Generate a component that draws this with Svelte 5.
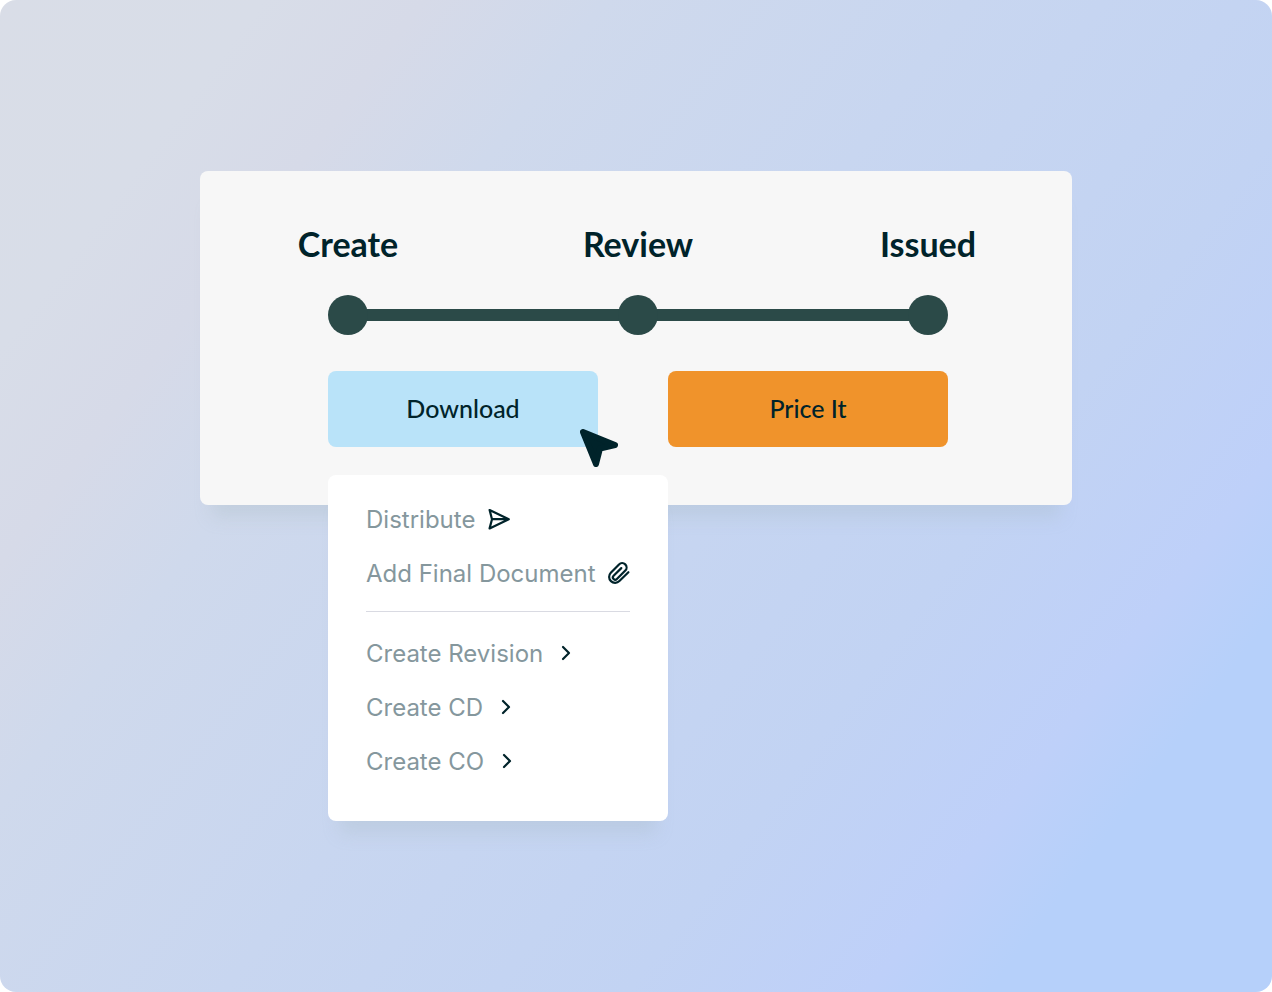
<script lang="ts">
  const steps = ['Create', 'Review', 'Issued'];

  const fileActions = [
    { label: 'Distribute', icon: 'send' },
    { label: 'Add Final Document', icon: 'clip' },
  ];

  const createActions = ['Create Revision', 'Create CD', 'Create CO'];

  let menuOpen = $state(true);
</script>

<main class="stage">
  <section class="card">
    <ol class="steps">
      {#each steps as step}
        <li class="step">
          <span class="step-label">{step}</span>
          <span class="step-dot"></span>
        </li>
      {/each}
    </ol>

    <div class="actions">
      <div class="dropdown">
        <button
          class="btn download"
          aria-expanded={menuOpen}
          onclick={() => (menuOpen = !menuOpen)}
        >
          Download
        </button>

        <svg class="cursor" viewBox="0 0 38 38" aria-hidden="true">
          <path
            d="M3 3L35 16L20 19.5L16 35Z"
            fill="#00232a"
            stroke="#00232a"
            stroke-width="6"
            stroke-linejoin="round"
          />
        </svg>

        {#if menuOpen}
          <div class="menu">
            {#each fileActions as action}
              <button class="menu-item">
                {action.label}
                {#if action.icon === 'send'}
                  <svg class="icon" viewBox="0 0 22 22" aria-hidden="true">
                    <path d="M2.6 1L21.8 10.2L2.6 19.4L5 10.2Z M5 10.2H21" />
                  </svg>
                {:else}
                  <svg class="icon" viewBox="2 3 22 22" aria-hidden="true">
                    <path
                      d="M22.4 12.2l-9 8.8a5.9 5.9 0 0 1-8.6-8.3l8.2-8.3a4.4 4.4 0 0 1 6.3 6.2l-8.4 8.4a2.3 2.3 0 0 1-3.3-3.3l7.7-7.6"
                    />
                  </svg>
                {/if}
              </button>
            {/each}

            <hr class="divider" />

            {#each createActions as label}
              <button class="menu-item">
                {label}
                <svg class="icon" viewBox="0 0 22 22" aria-hidden="true">
                  <path d="M8 4L14 10L8 16" />
                </svg>
              </button>
            {/each}
          </div>
        {/if}
      </div>

      <button class="btn price">Price It</button>
    </div>
  </section>
</main>

<style>
  :global(body) {
    margin: 0;
    background: #fff;
  }

  .stage {
    box-sizing: border-box;
    min-height: 100vh;
    padding: 171px 200px;
    border-radius: 16px;
    background: linear-gradient(
      127deg,
      #d9dde7 0%,
      #d8dde8 13%,
      #d6dae8 21%,
      #cfd9ec 30%,
      #c8d6f0 48%,
      #c2d3f3 68%,
      #bed0f9 80%,
      #b6d0fa 86%,
      #b6d0fa 100%
    );
    color: #00232a;
    font-family: Lato, 'Liberation Sans', sans-serif;
  }

  .card {
    padding: 53px 124px 58px 128px;
    border-radius: 8px;
    background: #f7f7f7;
    box-shadow: 0 24px 16px -12px rgba(160, 180, 185, 0.25);
  }

  .steps {
    display: flex;
    justify-content: space-between;
    margin: 0 0 36px;
    padding: 0;
    list-style: none;
    background: linear-gradient(#2b4a48, #2b4a48) no-repeat center bottom 14px / calc(100% - 40px) 12px;
  }

  .step {
    display: flex;
    flex-direction: column;
    align-items: center;
    gap: 31px;
    width: 40px;
  }

  .step-label {
    font-size: 34px;
    font-weight: 700;
    line-height: 40px;
    white-space: nowrap;
  }

  .step-dot {
    width: 40px;
    height: 40px;
    border-radius: 50%;
    background: #2b4a48;
  }

  .actions {
    display: grid;
    grid-template-columns: 27fr 28fr;
    gap: 70px;
  }

  .dropdown {
    position: relative;
  }

  .btn {
    width: 100%;
    height: 76px;
    padding: 0 0 2px;
    border: none;
    border-radius: 8px;
    color: #00232a;
    font-family: inherit;
    font-size: 25px;
    font-weight: 500;
    cursor: pointer;
  }

  .download {
    background: #b9e3f9;
  }

  .price {
    background: #f0932b;
  }

  .cursor {
    position: absolute;
    right: -20px;
    bottom: -20px;
    width: 38px;
    height: 38px;
    pointer-events: none;
  }

  .menu {
    position: absolute;
    top: calc(100% + 28px);
    left: 0;
    padding: 18px 38px 32px;
    border-radius: 8px;
    background: #fff;
    box-shadow: 0 24px 16px -12px rgba(160, 180, 185, 0.25);
  }

  .menu-item {
    display: flex;
    align-items: center;
    gap: 12px;
    width: 100%;
    padding: 0;
    border: none;
    background: none;
    color: #85979d;
    font-family: Inter, 'Liberation Sans', sans-serif;
    font-size: 24px;
    line-height: 54px;
    white-space: nowrap;
    cursor: pointer;
  }

  .icon {
    flex: none;
    width: 22px;
    height: 22px;
    overflow: visible;
    fill: none;
    stroke: #00232a;
    stroke-width: 2.2;
    stroke-linecap: round;
    stroke-linejoin: round;
  }

  .divider {
    margin: 10px 0 15px;
    border: none;
    border-top: 1px solid #d9dae2;
  }
</style>
